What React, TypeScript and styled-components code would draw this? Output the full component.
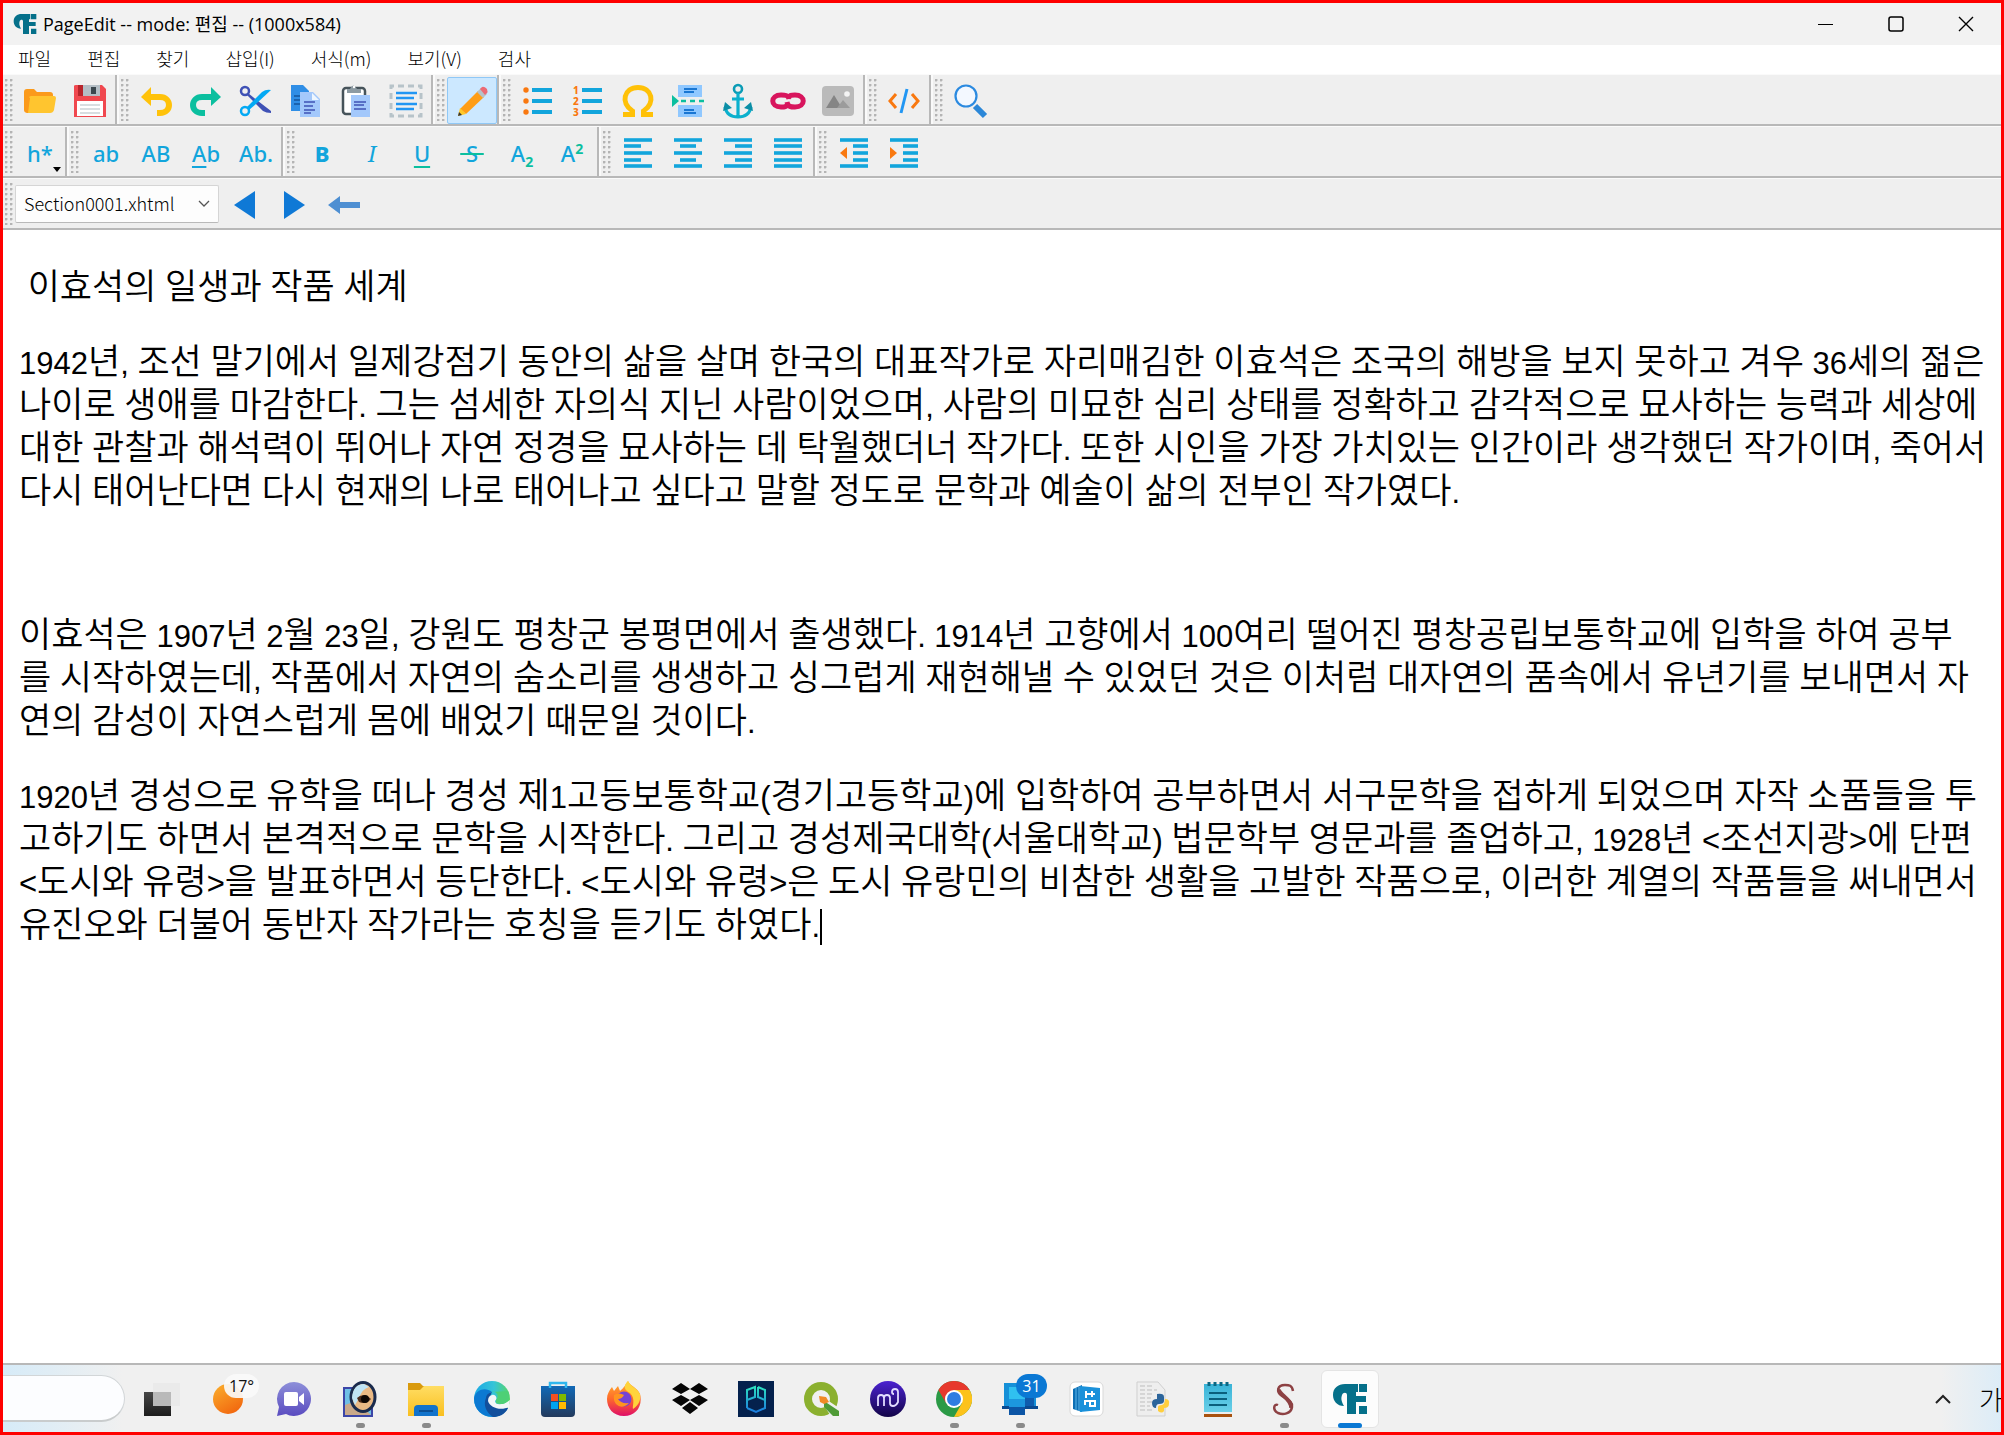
import React from "react";
import styled, { createGlobalStyle, css } from "styled-components";

const GlobalStyle = createGlobalStyle`
  * { box-sizing: border-box; }
  body { margin: 0; background: #fff; }
  button, select { font: inherit; color: inherit; }
`;

const uiFont = `"Noto Sans CJK KR", sans-serif`;
const cyan = "#12a5dc";
const orange = "#f9780f";
const green = "#0bbf9f";

/* ---------- window frame ---------- */

const Window = styled.div`
  display: flex;
  flex-direction: column;
  min-height: 100vh;
  border: 3px solid #f00;
  background: #fff;
  overflow: hidden;
  font-family: ${uiFont};
  color: #000;
`;

const TitleBar = styled.header`
  display: flex;
  align-items: center;
  height: 42px;
  padding-left: 10px;
  background: #f2f2f2;
`;

const Title = styled.h1`
  flex: 1;
  margin: 0;
  padding: 0 0 0 6px;
  font: 400 18px/24px "Open Sans", "Noto Sans CJK KR", sans-serif;
`;

const CaptionButton = styled.button`
  display: grid;
  place-items: center;
  width: 70px;
  height: 42px;
  padding: 0;
  border: 0;
  background: none;
`;

const MenuBar = styled.nav`
  display: flex;
  align-items: flex-start;
  gap: 36px;
  height: 29px;
  padding-left: 15px;
  background: #fff;
`;

const MenuItem = styled.button`
  padding: 0;
  border: 0;
  background: none;
  font-size: 18px;
  font-weight: 300;
  line-height: 26px;
`;

/* ---------- tool bars ---------- */

const ToolRow = styled.div`
  display: flex;
  height: 52px;
  border-top: 1px solid #fafafa;
  border-bottom: 2px solid #b8b8b8;
  background: #efefef;
`;

const ToolGroup = styled.div<{ $last?: boolean }>`
  display: flex;
  align-items: center;
  border-left: 2px solid #fafafa;
  ${(p) => (p.$last ? css`flex: 1;` : css`border-right: 2px solid #b8b8b8;`)}
  &:first-child { border-left: 0; }
`;

const Grip = styled.span`
  width: 8px;
  height: 42px;
  margin: 0 2px;
  background:
    radial-gradient(circle at 1px 1px, #b4b4b4 1px, transparent 2px) 0 0 / 5px 5px;
`;

const ToolButton = styled.button<{ $active?: boolean }>`
  position: relative;
  display: grid;
  place-items: center;
  width: 50px;
  height: 47px;
  margin-top: 2px;
  padding: 0;
  border: 1px solid ${(p) => (p.$active ? "#90c8f6" : "transparent")};
  border-radius: 2px;
  background: ${(p) => (p.$active ? "#cce8ff" : "none")};
`;

const Glyph = styled.span<{ $bold?: boolean; $italic?: boolean; $serif?: boolean }>`
  color: ${cyan};
  font-family: ${(p) => (p.$serif ? `"Noto Serif", "DejaVu Serif", serif` : `"Noto Sans", "Open Sans", sans-serif`)};
  font-size: 22px;
  line-height: 28px;
  font-weight: ${(p) => (p.$bold ? 800 : p.$serif ? 400 : 500)};
  font-style: ${(p) => (p.$italic ? "italic" : "normal")};
  u { text-decoration-thickness: 2px; text-underline-offset: 4px; }
  u.green { text-decoration-color: ${green}; }
  s { text-decoration-color: ${green}; text-decoration-thickness: 2px; }
  sub, sup { color: ${green}; font-size: 14px; font-weight: 700; line-height: 0; }
`;

const DropMark = styled.span`
  position: absolute;
  right: 3px;
  bottom: 3px;
  border: 4px solid transparent;
  border-top: 5px solid #000;
  border-bottom: 0;
`;

const SelectWrap = styled.label`
  position: relative;
  display: flex;
`;

const SectionSelect = styled.select`
  appearance: none;
  width: 204px;
  height: 38px;
  padding: 0 34px 2px 8px;
  border: 1px solid #d5d5d5;
  border-bottom-color: #b9b9b9;
  border-radius: 2px;
  background: #fdfdfd;
  font-size: 18px;
  font-weight: 300;
`;

const SelectArrow = styled.svg`
  position: absolute;
  right: 8px;
  top: 14px;
`;

/* ---------- document ---------- */

const Document = styled.main`
  flex: 1;
  padding: 3px 16px 0;
  font: 350 35px/43px "Liberation Sans", "Noto Sans CJK KR", sans-serif;
  white-space: nowrap;
`;

const Paragraph = styled.p<{ $blank?: boolean }>`
  min-height: ${(p) => (p.$blank ? 37 : 43)}px;
  margin: 32px 0;
`;

const Line = styled.span`
  display: block;
  height: 43px;
`;

const Latin = styled.span`
  font-size: 31px;
  font-weight: 400;
`;

const Caret = styled.span`
  display: inline-block;
  width: 2px;
  height: 36px;
  background: #000;
  vertical-align: -8px;
`;

/* ---------- task bar ---------- */

const TaskBar = styled.footer`
  display: flex;
  align-items: center;
  height: 69px;
  border-top: 2px solid #b8b8b8;
  background: linear-gradient(90deg, #d6ebf8 0, #f0f0f0 120px, #f0f0f0 calc(100% - 60px), #dcecf7 100%);
`;

const SearchBox = styled.input`
  width: 122px;
  height: 47px;
  margin-right: 4px;
  border: 1px solid #d2d6d8;
  border-left: 0;
  border-bottom: 2px solid #c9cccd;
  border-radius: 0 24px 24px 0;
  background: #fcfdff;
`;

const Task = styled.button<{ $active?: boolean }>`
  position: relative;
  display: grid;
  place-items: center;
  width: 58px;
  height: 58px;
  margin: 0 4px;
  padding: 0;
  border: 1px solid ${(p) => (p.$active ? "#e4e4e4" : "transparent")};
  border-radius: 6px;
  background: ${(p) => (p.$active ? "#fcfcfc" : "none")};
`;

const Running = styled.span<{ $active?: boolean }>`
  position: absolute;
  bottom: -1px;
  width: ${(p) => (p.$active ? 24 : 9)}px;
  height: 5px;
  border-radius: 3px;
  background: ${(p) => (p.$active ? "#0a78d4" : "#8a8a8a")};
`;

const Badge = styled.span<{ $blue?: boolean }>`
  position: absolute;
  top: 3px;
  left: 24px;
  min-width: 31px;
  padding: 0 5px;
  border-radius: 12px;
  background: ${(p) => (p.$blue ? "#0a78d4" : "rgba(250,250,250,.92)")};
  color: ${(p) => (p.$blue ? "#fff" : "#111")};
  font: 400 16px/24px "Open Sans", sans-serif;
`;

const Tray = styled.div`
  display: flex;
  align-items: center;
  gap: 28px;
  margin-left: auto;
  margin-right: -2px;
`;

const TrayButton = styled.button`
  display: flex;
  align-items: center;
  height: 44px;
  padding: 0;
  border: 0;
  background: none;
  font-size: 26px;
  font-weight: 300;
  line-height: 36px;
`;

/* ---------- drawings ---------- */

const Icon = ({ children, size = 36 }: { children: React.ReactNode; size?: number }) => (
  <svg width={size} height={size} viewBox="0 0 36 36" fill="none" aria-hidden="true">{children}</svg>
);

const Logo = ({ size }: { size: number }) => (
  <svg width={size} height={size} viewBox="0 0 36 36" aria-hidden="true" fill="#05708a">
    <path d="M13 3H26V11H24V15H34V21H24V33H15V14C15 11 11 11 10 14C9 17 9 20 12 25C5 25 1 20 1 14C1 7 6 3 13 3Z" />
    <path d="M27 3H35V11H27ZM27 25H35V33H27Z" />
  </svg>
);

const bars = (rows: number[][], sw = 4) =>
  rows.map(([x1, x2, y], i) => <path key={i} d={`M${x1} ${y}H${x2}`} stroke={cyan} strokeWidth={sw} />);

const icons: Record<string, React.ReactNode> = {
  open: <><path d="M2 9Q2 6 5 6H12L15 9H28Q31 9 31 12V26H2Z" fill="#fb9a1b" /><path d="M9 13H32Q34 13 34 15L32 27Q31 30 28 30H6Q3 30 4 26L7 15Q7 13 9 13Z" fill="#ffc52f" /><path d="M2 12V27Q2 30 6 30L8 15Z" fill="#fb9a1b" /></>,
  save: <><path d="M2 3Q2 2 4 2H30L34 6V34H2Z" fill="#f0484f" /><path d="M6 2H16V13H6Z" fill="#b8252c" /><path d="M11 2H28V13H11Z" fill="#b4bec5" /><path d="M19 4H24V11H19Z" fill="#3b474e" /><path d="M5 18H31V33H5Z" fill="#fff" /><path d="M8 22H28M8 26H28M8 30H28" stroke="#ccd3d8" strokeWidth="1.5" /></>,
  undo: <><path d="M13 4V23L3 14Z" fill="#ffc20a" /><path d="M12 14H22C34 14 34 30 22 30H19" stroke="#ffc20a" strokeWidth="6" /></>,
  redo: <><path d="M23 4V23L33 14Z" fill="#0bbf9f" /><path d="M24 14H14C2 14 2 30 14 30H17" stroke="#0bbf9f" strokeWidth="6" /></>,
  cut: <><circle cx="7" cy="8" r="4" stroke="#3f51b5" strokeWidth="2.5" /><path d="M10 10L20 18L33 28V30Q28 30 25 28L9 12Z" fill="#3f51b5" /><circle cx="7" cy="28" r="4" stroke="#03a9f4" strokeWidth="2.5" /><path d="M9 24L24 9Q28 6 33 7L19 20L11 27Z" fill="#03a9f4" /></>,
  copy: <><path d="M3 2H15L21 8V28H3Z" fill="#2f8ee6" /><path d="M6 13H12M6 17H12M6 21H12" stroke="#14569d" strokeWidth="1.5" /><path d="M12 9H25L32 16V34H12Z" fill="#a3c8fb" /><path d="M24 10V17H31Z" fill="#eef6ff" /><path d="M16 19H27M16 23H25M16 27H27M16 30H23" stroke="#3f51b5" strokeWidth="1.5" /></>,
  paste: <><rect x="5" y="5" width="22" height="26" rx="3" fill="#fff" stroke="#46535a" strokeWidth="2.5" /><path d="M9 10V6H12Q15 -1 19 6H23V10Z" fill="#8d9ba3" /><circle cx="16" cy="4" r="1.2" fill="#fff" /><path d="M13 12H32V34H13Z" fill="#a3c8fb" /><path d="M16 19H28M16 22H26M16 26H28" stroke="#3f51b5" strokeWidth="1.5" /></>,
  select: <><path d="M3 3H33V33H3Z" stroke="#b7c3c9" strokeWidth="3" strokeDasharray="6 4" strokeDashoffset="3" /><path d="M8 10H29M8 15H26M8 21H29M8 26H26" stroke="#2196f3" strokeWidth="2.5" /></>,
  pencil: <><path d="M6 26L24 8L30 14L12 31Z" fill="#ff9d16" /><path d="M23 9L27 5L33 11L29 15Z" fill="#b6c1c8" /><path d="M26 6L28 4Q30 3 33 6Q34 9 33 10L31 12Z" fill="#ec6a75" /><path d="M6 25L12 31L4 33Z" fill="#ffc928" /><path d="M5 29L8 32L4 33Z" fill="#333" /></>,
  ul: <>{bars([[12, 32, 7], [12, 32, 18], [12, 32, 29]])}{[7, 18, 29].map((y) => <circle key={y} cx="6" cy={y} r="2.7" fill={orange} />)}</>,
  ol: <>{bars([[12, 32, 7], [12, 32, 18], [12, 32, 29]])}<g fill={orange} fontFamily="Noto Sans" fontWeight="800" fontSize="10"><text x="3" y="11">1</text><text x="3" y="22">2</text><text x="3" y="33">3</text></g></>,
  omega: <path d="M3 31.500H12.500V28C0 20 4 4.500 18 4.500S36 20 23.500 28V31.500H33" stroke="#ffc107" strokeWidth="5" />,
  split: <><path d="M8 2H32V14H8ZM8 22H32V34H8Z" fill="#90c8ff" /><path d="M14 6H27M14 9H24M14 27H24M14 30H26" stroke="#1976d2" strokeWidth="1.8" /><path d="M2 12L9 18L2 24Z" fill={green} /><path d="M11 18H34" stroke={green} strokeWidth="2.5" strokeDasharray="5 4" /></>,
  anchor: <><circle cx="18" cy="6" r="4" stroke="#0b9cb6" strokeWidth="2.6" /><path d="M18 10V33M12 16H24M5 24Q7 34 18 34T31 24" stroke="#0bb0cd" strokeWidth="3.2" /><path d="M3 28L5 19L12 25ZM33 28L31 19L24 25Z" fill="#0b8ea6" /></>,
  link: <g stroke="#d8155d" strokeWidth="5"><path d="M19 16C18 12 15 12 11 12C0 12 0 24 11 24C15 24 16 24 18 21" /><path d="M17 19C18 24 21 24 25 24C36 24 36 12 25 12C21 12 20 12 18 15" /></g>,
  image: <><rect x="2" y="3" width="32" height="30" rx="4" fill="#bababa" /><path d="M6 25L14 12L22 25Z" fill="#858585" /><path d="M17 25L23 17L30 25Z" fill="#9b9b9b" /><circle cx="27" cy="11" r="2.8" fill="#f4f4f4" /></>,
  code: <><path d="M10 11L4 18L10 25M26 11L32 18L26 25" stroke={orange} strokeWidth="3" /><path d="M21 6L15 30" stroke="#2196f3" strokeWidth="3" /></>,
  search: <><path d="M23 23L33 33" stroke="#2b87d8" strokeWidth="6" /><circle cx="14" cy="13" r="10.5" fill="#f3f8ff" stroke="#2b8ae0" strokeWidth="2.2" /></>,
  left: <>{bars([[4, 32, 5], [4, 21, 11], [4, 32, 18], [4, 21, 25], [4, 32, 31]], 3.6)}</>,
  center: <>{bars([[4, 32, 5], [10, 26, 11], [4, 32, 18], [10, 26, 25], [4, 32, 31]], 3.6)}</>,
  right: <>{bars([[4, 32, 5], [15, 32, 11], [4, 32, 18], [15, 32, 25], [4, 32, 31]], 3.6)}</>,
  justify: <>{bars([[4, 32, 5], [4, 32, 11], [4, 32, 18], [4, 32, 25], [4, 32, 31]], 3.6)}</>,
  outdent: <>{bars([[4, 32, 5], [17, 32, 11], [17, 32, 18], [17, 32, 25], [4, 32, 31]], 3.6)}<path d="M11 12V24L4 18Z" fill={orange} /></>,
  indent: <>{bars([[4, 32, 5], [17, 32, 11], [17, 32, 18], [17, 32, 25], [4, 32, 31]], 3.6)}<path d="M4 12V24L11 18Z" fill={orange} /></>,
  prev: <path d="M29 4V32L8 18Z" fill="#0f79d6" />,
  next: <path d="M8 4V32L29 18Z" fill="#0f79d6" />,
  back: <path d="M2 18L14 9V15H34V21H14V27Z" fill="#4e8fd2" />,
};

const T = ({ name, icon, active }: { name: string; icon: string; active?: boolean }) => (
  <ToolButton aria-label={name} $active={active}><Icon>{icons[icon]}</Icon></ToolButton>
);

const tasks: { name: string; art: React.ReactNode; run?: boolean; active?: boolean; badge?: string; blue?: boolean }[] = [
  { name: "작업 보기", art: <><path d="M0 11H27V35H0Z" fill="url(#tvDark)" /><path d="M9 2H36V25H9Z" fill="#e9e9e9" opacity=".85" /><path d="M9 11H27V25H9Z" fill="#b9b9b9" /><defs><linearGradient id="tvDark" x2="0" y2="1"><stop stopColor="#474747" /><stop offset="1" stopColor="#1c1c1c" /></linearGradient></defs></> },
  { name: "날씨", badge: "17°", art: <><circle cx="18" cy="18" r="15" fill="url(#sun)" /><defs><linearGradient id="sun" x2=".6" y2="1"><stop stopColor="#fbb02d" /><stop offset="1" stopColor="#f26a10" /></linearGradient></defs></> },
  { name: "채팅", art: <><path d="M18 1A17 17 0 1 1 10 33L1 35L3 26A17 17 0 0 1 18 1Z" fill="url(#chat)" /><rect x="8" y="11" width="14" height="14" rx="2" fill="#fff" /><path d="M23 16L28 12V24L23 20Z" fill="#fff" /><defs><linearGradient id="chat" x2="0" y2="1"><stop stopColor="#8d8fd9" /><stop offset="1" stopColor="#5a4cc0" /></linearGradient></defs></> },
  { name: "이미지 뷰어", run: true, art: <><path d="M1 6H31V36H1Z" fill="#3c46a8" /><path d="M3 8H29V34H3Z" fill="#6fc0e6" /><path d="M3 24L14 20L29 34H3Z" fill="#c9a98a" /><ellipse cx="21" cy="16" rx="12" ry="14.5" fill="#e9b985" stroke="#1a2b4d" strokeWidth="3" /><path d="M10 17Q11 3 22 3L27 6Q20 8 17 17L13 24Z" fill="#bfe4f5" /><path d="M15 17Q21 11 29 18Q24 24 17 21Z" fill="#4b2b1b" /><circle cx="23" cy="18" r="4" fill="#0d0705" /></> },
  { name: "파일 탐색기", run: true, art: <><path d="M0 2H12L15 5H34V12H0Z" fill="#d99a0d" /><path d="M0 9H12L16 5H36V35H0Z" fill="url(#folder)" /><path d="M6 35V28Q6 24 10 24H26Q30 24 30 28V35Z" fill="#1273cb" /><path d="M11 30H25" stroke="#0b4f94" strokeWidth="2" /><defs><linearGradient id="folder" x2="0" y2="1"><stop stopColor="#ffdd63" /><stop offset="1" stopColor="#f9bf1f" /></linearGradient></defs></> },
  { name: "Edge", art: <><circle cx="18" cy="18" r="18" fill="url(#edgeTop)" /><path d="M0 17C2 8 12 6 18 11C13 12 12 17 14 22C17 31 28 31 34 27C27 41 0 39 0 17Z" fill="#0c79d2" /><path d="M12 17C12 14 14 12 18 11C13 20 20 27 34 27C31 34 24 36 19 36C12 31 9 24 12 17Z" fill="#124f9c" /><path d="M18 14C22 13 24 18 21 20C21 24 28 25 36 19L35 26C27 30 16 27 14 20Q14 15 18 14Z" fill="#f2f6f8" /><path d="M22 19C26 14 22 10 18 11L34 10C38 18 32 26 22 22Z" fill="#4ed076" /><defs><linearGradient id="edgeTop"><stop stopColor="#1ba8e4" /><stop offset=".55" stopColor="#35c4d8" /><stop offset="1" stopColor="#58d664" /></linearGradient></defs></> },
  { name: "Store", art: <><path d="M1 5H35V32Q35 36 31 36H5Q1 36 1 32Z" fill="url(#store)" /><path d="M10 7V2H26V7" stroke="#2fb7ee" strokeWidth="2.5" /><path d="M11 13H18V20H11Z" fill="#f25022" /><path d="M19 13H26V20H19Z" fill="#7fba00" /><path d="M11 21H18V28H11Z" fill="#00a4ef" /><path d="M19 21H26V28H19Z" fill="#ffb900" /><defs><linearGradient id="store" x2="0" y2="1"><stop stopColor="#1169b7" /><stop offset="1" stopColor="#233a5c" /></linearGradient></defs></> },
  { name: "Firefox", art: <><path d="M22 0C24 5 31 6 34 13C37 25 30 35 18 35C7 35 1 27 1 18C1 13 3 10 6 6L8 10L12 5L14 10C18 7 19 4 22 0Z" fill="url(#fox)" /><path d="M22 0C17 5 18 9 24 12C30 18 26 25 27 28C33 24 35 19 34 13C31 7 25 6 22 0Z" fill="#ffd43c" /><circle cx="18" cy="18" r="7.5" fill="#7542d5" /><path d="M8 14Q13 11 18 14Q16 18 12 18Q15 23 23 22Q16 29 10 23Q7 19 8 14Z" fill="#ff9420" /><defs><linearGradient id="fox" x2="0" y2="1"><stop stopColor="#ffb12b" /><stop offset=".5" stopColor="#ff6b2b" /><stop offset="1" stopColor="#df0e68" /></linearGradient></defs></> },
  { name: "Dropbox", art: <path d="M9 2L18 8L9 13L0 8ZM27 2L36 8L27 13L18 8ZM9 14L18 19L9 25L0 19ZM27 14L36 19L27 25L18 19ZM18 21L26 27L18 33L10 27Z" fill="#050505" /> },
  { name: "PG", art: <><path d="M0 0H36V36H0Z" fill="#04214d" /><path d="M9 27V9L17 6V16L9 19M20 6V16L27 19V27L18 31L9 27M20 6L27 9V20" stroke="url(#pg)" strokeWidth="2" /><defs><linearGradient id="pg" x2="0" y2="1"><stop stopColor="#2be0c0" /><stop offset="1" stopColor="#1b7de0" /></linearGradient></defs></> },
  { name: "QGIS", art: <><circle cx="17" cy="18" r="13" stroke="#8bb02f" strokeWidth="8" /><path d="M16 16L34 28V34H28Z" fill="#efefef" stroke="#efefef" strokeWidth="3" /><path d="M20 20L35 30V35H29L20 26Z" fill="#4f9a36" /><path d="M15 15L22 16L25 21L20 23L16 21Z" fill="#f08a26" /></> },
  { name: "MuseScore", art: <><circle cx="18" cy="18" r="18" fill="url(#muse)" /><path d="M8 25V17Q8 14 11 14T14 17V25M14 17Q14 14 17 14T20 17V22Q20 25 23 25T28 21V11Q28 8 25 8T22 11Q22 13 24 13" stroke="#e1dcff" strokeWidth="1.8" /><defs><linearGradient id="muse" x2="0" y2="1"><stop stopColor="#4b22d1" /><stop offset="1" stopColor="#120447" /></linearGradient></defs></> },
  { name: "Chrome", run: true, art: <><circle cx="18" cy="18" r="18" fill="#2b9a46" /><path d="M2.400 9A18 18 0 0 1 33.600 9L18 9L10 22Z" fill="#e7382c" /><path d="M33.600 9A18 18 0 0 1 18 36L26 22L18 9Z" fill="#fcc21b" /><circle cx="18" cy="18" r="9" fill="#fff" /><circle cx="18" cy="18" r="7" fill="#2f7de1" /></> },
  { name: "휴대폰 연결", run: true, badge: "31", blue: true, art: <><path d="M2 2H34V25H2Z" fill="#1590d8" /><path d="M0 25H36V28H0Z" fill="#0a4a91" /><path d="M22 12H32V25H22Z" fill="#0f5cad" /><path d="M7 6H23V33H7Z" fill="#30c0f0" /><path d="M7 18H23V33H7Z" fill="#1c97de" /><path d="M7 26H23V34H7Z" fill="#0c55a5" /></> },
  { name: "리디북스", art: <><rect x="2" y="1" width="33" height="34" rx="5" fill="#fff" stroke="#d8d8d8" /><path d="M5 8L14 4V31L5 28Z" fill="#0d6fb4" /><path d="M12 5L32 7V29L12 31Z" fill="#1a91da" /><path d="M8 7V29M11 6V30" stroke="#5fb8ea" /><path d="M18 10V17M18 13H27M24 10V16M17 24V20H27V25H22V20" stroke="#fff" strokeWidth="2" /></> },
  { name: "Python", art: <><path d="M3 1H24L31 9V35H3Z" fill="#eee" stroke="#cfcfcf" /><path d="M6 5H20M6 9H23M6 13H18M6 17H17M6 21H18M6 25H16M6 29H18" stroke="#bdbdbd" strokeDasharray="5 2" /><path d="M23 13Q30 12 30 16V20Q30 23 25 23Q22 23 22 27Q18 27 18 22Q18 18 23 18Z" fill="#2c659b" /><path d="M31 18Q36 18 35 23Q35 27 30 27V30Q28 33 24 30V26Q24 24 28 24Q31 23 31 18Z" fill="#ffcf3f" /></> },
  { name: "메모장", art: <><path d="M4 3H32V34H4Z" fill="url(#memo)" /><path d="M4 31H32V33H4Z" fill="#eee" /><path d="M4 33H32V36H4Z" fill="#a9520f" /><path d="M9 12H27M9 18H27M9 24H27" stroke="#0b5f7c" strokeWidth="2" /><path d="M9 1V5M15 1V5M21 1V5M27 1V5" stroke="#0b6783" strokeWidth="3" /><defs><linearGradient id="memo" x2="0" y2="1"><stop stopColor="#39b3d7" /><stop offset="1" stopColor="#6fd3ea" /></linearGradient></defs></> },
  { name: "Sigil", run: true, art: <><path d="M27 10C26 4 23 4 19 4C11 4 10 11 16 15C22 19 27 21 26 26C25 33 17 34 12 32C6 29 8 22 12 24" stroke="#8d4143" strokeWidth="2.500" /><path d="M13 8C12 13 26 18 25 27" stroke="#8d4143" strokeWidth="4" /></> },
  { name: "PageEdit", run: true, active: true, art: null },
];

/* ---------- document text ---------- */

const paragraphs: string[][] = [
  ["\u00a0이효석의 일생과 작품 세계"],
  [
    "1942년, 조선 말기에서 일제강점기 동안의 삶을 살며 한국의 대표작가로 자리매김한 이효석은 조국의 해방을 보지 못하고 겨우 36세의 젊은",
    "나이로 생애를 마감한다. 그는 섬세한 자의식 지닌 사람이었으며, 사람의 미묘한 심리 상태를 정확하고 감각적으로 묘사하는 능력과 세상에",
    "대한 관찰과 해석력이 뛰어나 자연 정경을 묘사하는 데 탁월했더너 작가다. 또한 시인을 가장 가치있는 인간이라 생각했던 작가이며, 죽어서",
    "다시 태어난다면 다시 현재의 나로 태어나고 싶다고 말할 정도로 문학과 예술이 삶의 전부인 작가였다.",
  ],
  [],
  [
    "이효석은 1907년 2월 23일, 강원도 평창군 봉평면에서 출생했다. 1914년 고향에서 100여리 떨어진 평창공립보통학교에 입학을 하여 공부",
    "를 시작하였는데, 작품에서 자연의 숨소리를 생생하고 싱그럽게 재현해낼 수 있었던 것은 이처럼 대자연의 품속에서 유년기를 보내면서 자",
    "연의 감성이 자연스럽게 몸에 배었기 때문일 것이다.",
  ],
  [
    "1920년 경성으로 유학을 떠나 경성 제1고등보통학교(경기고등학교)에 입학하여 공부하면서 서구문학을 접하게 되었으며 자작 소품들을 투",
    "고하기도 하면서 본격적으로 문학을 시작한다. 그리고 경성제국대학(서울대학교) 법문학부 영문과를 졸업하고, 1928년 <조선지광>에 단편",
    "<도시와 유령>을 발표하면서 등단한다. <도시와 유령>은 도시 유랑민의 비참한 생활을 고발한 작품으로, 이러한 계열의 작품들을 써내면서",
    "유진오와 더불어 동반자 작가라는 호칭을 듣기도 하였다.",
  ],
];

// Hangul keeps the paragraph size; digits, spaces and punctuation are set smaller.
const mixed = (text: string) =>
  text.split(/([^가-힣]+)/).map((run, i) => (i % 2 ? <Latin key={i}>{run}</Latin> : run));

export default function App() {
  return (
    <Window>
      <GlobalStyle />
      <TitleBar>
        <Logo size={24} />
        <Title>PageEdit -- mode: 편집 -- (1000x584)</Title>
        <CaptionButton aria-label="최소화"><svg width="16" height="16"><path d="M0 8.500H15" stroke="#000" /></svg></CaptionButton>
        <CaptionButton aria-label="최대화"><svg width="16" height="16"><rect x="1" y="1" width="14" height="14" rx="2" fill="none" stroke="#000" strokeWidth="1.500" /></svg></CaptionButton>
        <CaptionButton aria-label="닫기"><svg width="16" height="16"><path d="M1 1L15 15M15 1L1 15" stroke="#000" strokeWidth="1.400" /></svg></CaptionButton>
      </TitleBar>

      <MenuBar>
        {["파일", "편집", "찾기", "삽입(I)", "서식(m)", "보기(V)", "검사"].map((m) => <MenuItem key={m}>{m}</MenuItem>)}
      </MenuBar>

      <ToolRow>
        <ToolGroup><Grip /><T name="열기" icon="open" /><T name="저장" icon="save" /></ToolGroup>
        <ToolGroup><Grip />
          <T name="실행 취소" icon="undo" /><T name="다시 실행" icon="redo" /><T name="잘라내기" icon="cut" />
          <T name="복사" icon="copy" /><T name="붙여넣기" icon="paste" /><T name="모두 선택" icon="select" />
        </ToolGroup>
        <ToolGroup><Grip /><T name="편집 모드" icon="pencil" active /></ToolGroup>
        <ToolGroup><Grip />
          <T name="글머리 기호" icon="ul" /><T name="번호 매기기" icon="ol" /><T name="특수 문자" icon="omega" />
          <T name="구분선" icon="split" /><T name="앵커" icon="anchor" /><T name="링크" icon="link" /><T name="그림" icon="image" />
        </ToolGroup>
        <ToolGroup><Grip /><T name="코드 보기" icon="code" /></ToolGroup>
        <ToolGroup $last><Grip /><T name="검색" icon="search" /></ToolGroup>
      </ToolRow>

      <ToolRow>
        <ToolGroup><Grip /><ToolButton><Glyph>h*</Glyph><DropMark /></ToolButton></ToolGroup>
        <ToolGroup><Grip />
          <ToolButton><Glyph>ab</Glyph></ToolButton>
          <ToolButton><Glyph>AB</Glyph></ToolButton>
          <ToolButton><Glyph><u>A</u>b</Glyph></ToolButton>
          <ToolButton><Glyph>Ab.</Glyph></ToolButton>
        </ToolGroup>
        <ToolGroup><Grip />
          <ToolButton><Glyph $bold>B</Glyph></ToolButton>
          <ToolButton><Glyph $italic $serif>I</Glyph></ToolButton>
          <ToolButton><Glyph><u className="green">U</u></Glyph></ToolButton>
          <ToolButton><Glyph><s>&nbsp;S&nbsp;</s></Glyph></ToolButton>
          <ToolButton><Glyph>A<sub>2</sub></Glyph></ToolButton>
          <ToolButton><Glyph>A<sup>2</sup></Glyph></ToolButton>
        </ToolGroup>
        <ToolGroup><Grip />
          <T name="왼쪽 맞춤" icon="left" /><T name="가운데 맞춤" icon="center" /><T name="오른쪽 맞춤" icon="right" /><T name="양쪽 맞춤" icon="justify" />
        </ToolGroup>
        <ToolGroup $last><Grip /><T name="내어쓰기" icon="outdent" /><T name="들여쓰기" icon="indent" /></ToolGroup>
      </ToolRow>

      <ToolRow>
        <ToolGroup $last><Grip />
          <SelectWrap>
            <SectionSelect aria-label="섹션"><option>Section0001.xhtml</option></SectionSelect>
            <SelectArrow width="14" height="10" fill="none"><path d="M2 2L7 7L12 2" stroke="#555" strokeWidth="1.300" /></SelectArrow>
          </SelectWrap>
          <T name="이전" icon="prev" /><T name="다음" icon="next" /><T name="뒤로" icon="back" />
        </ToolGroup>
      </ToolRow>

      <Document>
        {paragraphs.map((lines, p) => (
          <Paragraph key={p} $blank={lines.length === 0}>
            {lines.map((line, i) => (
              <Line key={i}>
                {mixed(line)}
                {p === paragraphs.length - 1 && i === lines.length - 1 && <Caret />}
              </Line>
            ))}
          </Paragraph>
        ))}
      </Document>

      <TaskBar>
        <SearchBox aria-label="검색" />
        {tasks.map((t) => (
          <Task key={t.name} aria-label={t.name} $active={t.active}>
            {t.art ? <Icon>{t.art}</Icon> : <Logo size={36} />}
            {t.badge && <Badge $blue={t.blue}>{t.badge}</Badge>}
            {t.run && <Running $active={t.active} />}
          </Task>
        ))}
        <Tray>
          <TrayButton aria-label="숨겨진 아이콘 표시"><svg width="16" height="10" fill="none"><path d="M1 9L8 2L15 9" stroke="#222" strokeWidth="2" /></svg></TrayButton>
          <TrayButton>가</TrayButton>
        </Tray>
      </TaskBar>
    </Window>
  );
}
